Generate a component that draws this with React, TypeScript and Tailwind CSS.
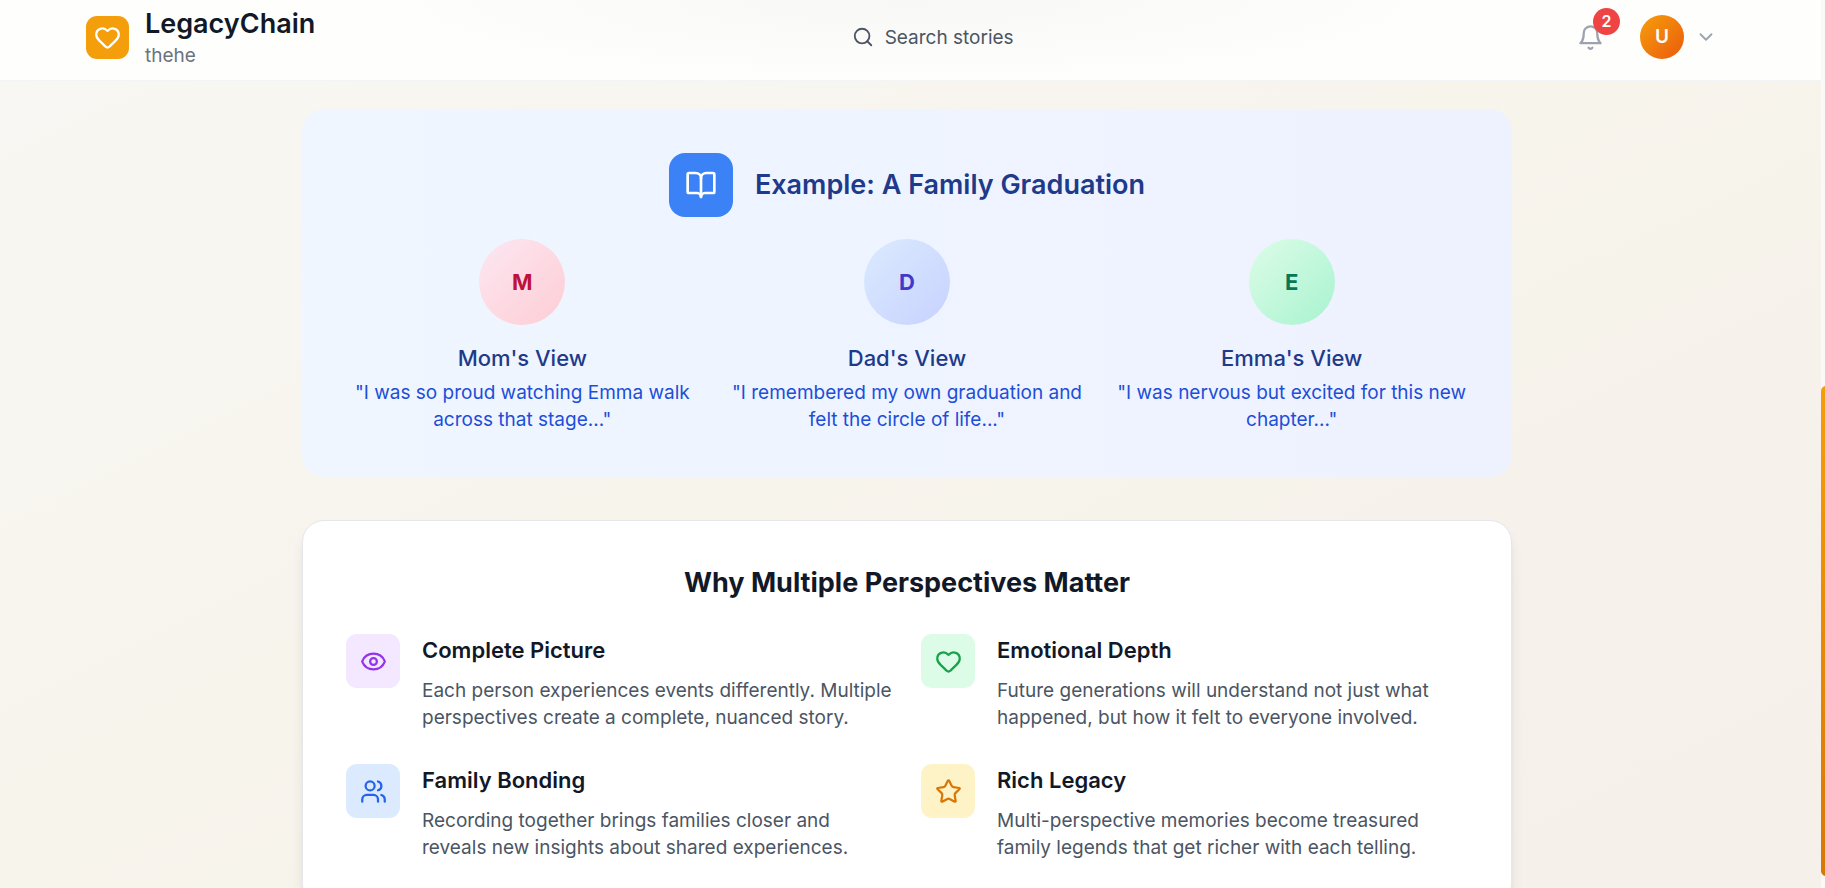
import React from 'react'
import { BookOpen, ChevronDown, Eye, Heart, Search, Star } from 'lucide-react'

interface IconProps {
  className?: string
}

function BellIcon({ className }: IconProps) {
  return (
    <svg className={className} viewBox="0 0 24 24" fill="none" stroke="currentColor" strokeWidth="2" strokeLinecap="round" strokeLinejoin="round" aria-hidden="true">
      <path d="M6 8a6 6 0 0 1 12 0c0 7 3 9 3 9H3s3-2 3-9" />
      <path d="M10.3 21a1.94 1.94 0 0 0 3.4 0" />
    </svg>
  )
}

function UsersIcon({ className }: IconProps) {
  return (
    <svg className={className} viewBox="0 0 24 24" fill="none" stroke="currentColor" strokeWidth="2" strokeLinecap="round" strokeLinejoin="round" aria-hidden="true">
      <path d="M16 21v-2a4 4 0 0 0-4-4H6a4 4 0 0 0-4 4v2" />
      <circle cx="9" cy="7" r="4" />
      <path d="M22 21v-2a4 4 0 0 0-3-3.87" />
      <path d="M16 3.13a4 4 0 0 1 0 7.75" />
    </svg>
  )
}

interface ViewProps {
  initial: string
  title: string
  quote: string
  color: string
}

function PerspectiveView({ initial, title, quote, color }: ViewProps) {
  return (
    <div className="text-center">
      <div className={`mx-auto mb-[17px] flex size-[86px] items-center justify-center rounded-full bg-linear-to-br ${color}`}>
        <span className="text-[22px] font-bold">{initial}</span>
      </div>
      <h3 className="mb-[5px] text-[22px] leading-8 font-medium text-[#1e3a8a]">{title}</h3>
      <p className="text-[19px] leading-[27px] text-[#1d4ed8]">{quote}</p>
    </div>
  )
}

interface BenefitProps {
  icon: React.ReactNode
  title: string
  text: string
  color: string
}

function Benefit({ icon, title, text, color }: BenefitProps) {
  return (
    <div className="flex items-start gap-[22px]">
      <div className={`flex size-[54px] shrink-0 items-center justify-center rounded-[11px] ${color}`}>{icon}</div>
      <div>
        <h3 className="mb-[11px] text-[22px] leading-8 font-semibold text-[#111827]">{title}</h3>
        <p className="text-[19px] leading-[27px] text-[#4b5563]">{text}</p>
      </div>
    </div>
  )
}

export default function App() {
  const views = [
    {
      initial: 'M',
      title: "Mom's View",
      quote: '"I was so proud watching Emma walk across that stage..."',
      color: 'from-[#fce7f3] to-[#fecdd3] text-[#be123c]',
    },
    {
      initial: 'D',
      title: "Dad's View",
      quote: '"I remembered my own graduation and felt the circle of life..."',
      color: 'from-[#dbeafe] to-[#c7d2fe] text-[#4338ca]',
    },
    {
      initial: 'E',
      title: "Emma's View",
      quote: '"I was nervous but excited for this new chapter..."',
      color: 'from-[#dcfce7] to-[#a7f3d0] text-[#047857]',
    },
  ]

  const benefits = [
    {
      icon: <Eye className="size-[27px]" />,
      title: 'Complete Picture',
      text: 'Each person experiences events differently. Multiple perspectives create a complete, nuanced story.',
      color: 'bg-[#f3e8ff] text-[#9333ea]',
    },
    {
      icon: <Heart className="size-[27px]" />,
      title: 'Emotional Depth',
      text: 'Future generations will understand not just what happened, but how it felt to everyone involved.',
      color: 'bg-[#dcfce7] text-[#16a34a]',
    },
    {
      icon: <UsersIcon className="size-[27px]" />,
      title: 'Family Bonding',
      text: 'Recording together brings families closer and reveals new insights about shared experiences.',
      color: 'bg-[#dbeafe] text-[#2563eb]',
    },
    {
      icon: <Star className="size-[27px]" />,
      title: 'Rich Legacy',
      text: 'Multi-perspective memories become treasured family legends that get richer with each telling.',
      color: 'bg-[#fef3c7] text-[#d97706]',
    },
  ]

  return (
    <div className="flex h-screen overflow-hidden font-[Inter,sans-serif]">
      <div className="min-w-0 flex-1 overflow-hidden bg-linear-to-br from-[#f8f7f3] via-[#f7f4ec] to-[#f5f0ea]">
        {/* Header */}
        <header className="border-b border-[#f3f4f6] bg-[#fefefd] bg-[radial-gradient(ellipse_30%_100%_at_50%_0%,#f8f8f7,#fafaf9_40%,transparent)] pr-[7px]">
          <div className="mx-auto flex h-20 max-w-[1728px] items-center justify-between px-[43px] pb-[6px]">
            <div className="flex items-center gap-4">
              <div className="flex size-[43px] items-center justify-center rounded-[11px] bg-[#f59e0b]">
                <Heart className="size-[27px] text-white" />
              </div>
              <div>
                <h1 className="text-[27px] leading-9 font-semibold text-[#111827]">LegacyChain</h1>
                <p className="text-[19px] leading-[27px] text-[#6b7280]">thehe</p>
              </div>
            </div>

            <button type="button" className="mr-4 flex items-center gap-[11px] text-[19px] leading-[27px] text-[#4b5563]">
              <Search className="size-[22px]" />
              Search stories
            </button>

            <div className="flex items-center gap-[14px]">
              <button type="button" aria-label="Notifications" className="relative p-[11px] text-[#9ca3af]">
                <BellIcon className="size-[27px]" />
                <span className="absolute -top-[5px] -right-[5px] flex size-[27px] items-center justify-center rounded-full bg-[#ef4444] text-base font-semibold text-white">
                  2
                </span>
              </button>
              <button type="button" aria-label="Account menu" className="flex items-center gap-[11px] px-[11px] text-[#9ca3af]">
                <span className="flex size-11 items-center justify-center rounded-full bg-linear-to-br from-[#f59e0b] to-[#ea580c] text-[19px] font-semibold text-white">
                  U
                </span>
                <ChevronDown className="size-[22px]" />
              </button>
            </div>
          </div>
        </header>

        {/* Main Content */}
        <main className="pt-7 pr-[7px]">
          <div className="mx-auto max-w-[1210px]">
            {/* Example */}
            <section className="mb-[43px] rounded-[22px] bg-linear-to-r from-[#eff6ff] to-[#eef2ff] p-11">
              <div className="mb-[22px] flex items-center justify-center gap-[22px]">
                <div className="flex size-16 items-center justify-center rounded-2xl bg-[#3b82f6]">
                  <BookOpen className="size-8 text-white" />
                </div>
                <h2 className="text-[27px] leading-9 font-semibold text-[#1e3a8a]">Example: A Family Graduation</h2>
              </div>
              <div className="grid grid-cols-3 gap-8">
                {views.map((view) => (
                  <PerspectiveView key={view.title} {...view} />
                ))}
              </div>
            </section>

            {/* Why it matters */}
            <section className="rounded-[22px] border border-[#e5e7eb] bg-white px-[43px] py-11 shadow-lg">
              <h2 className="mb-[33px] text-center text-[27px] leading-9 font-bold text-[#111827]">
                Why Multiple Perspectives Matter
              </h2>
              <div className="grid grid-cols-2 gap-x-7 gap-y-[33px]">
                {benefits.map((benefit) => (
                  <Benefit key={benefit.title} {...benefit} />
                ))}
              </div>
            </section>
          </div>
        </main>
      </div>

      {/* Scroll track */}
      <div className="flex w-1 shrink-0 flex-col justify-end overflow-hidden bg-[#faf8f8] pb-3">
        <div className="h-[490px] w-[11px] rounded-[5px] bg-linear-to-b from-[#f59e0b] to-[#d97706]"></div>
      </div>
    </div>
  )
}
